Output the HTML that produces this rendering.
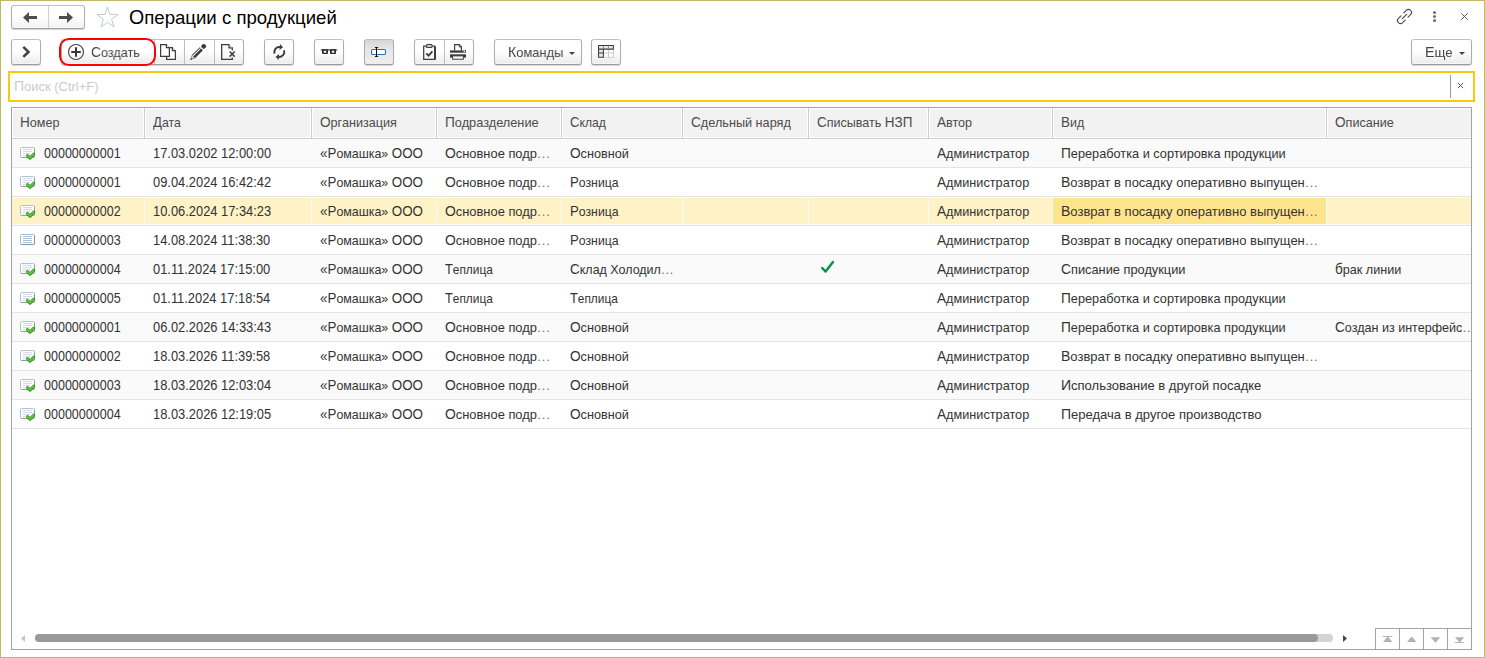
<!DOCTYPE html>
<html lang="ru"><head><meta charset="utf-8"><title>Операции с продукцией</title>
<style>
*{box-sizing:border-box;margin:0;padding:0}
html,body{width:1485px;height:658px;overflow:hidden;background:#fff}
body{font-family:"Liberation Sans",sans-serif;font-size:13px;color:#333;position:relative}
.abs{position:absolute}
#frame{position:absolute;left:0;top:0;width:1485px;height:658px;border:1px solid #c3b763;pointer-events:none}
.btn{position:absolute;height:26px;border:1px solid #adadad;border-top-color:#c0c0c0;border-bottom-color:#9c9c9c;border-radius:3px;
 background:linear-gradient(#ffffff 0%,#ffffff 45%,#ebebeb 100%);box-shadow:0 1px 1px rgba(0,0,0,.17),inset 0 -1px 0 rgba(255,255,255,.55)}
.btn.pressed{background:linear-gradient(#d6d6d6 0%,#e6e6e6 40%,#efefef 100%);box-shadow:0 1px 1px rgba(0,0,0,.18)}
.btn .sep{position:absolute;top:0;bottom:0;width:1px;background:#bdbdbd}
.btn svg{position:absolute}
.t{position:absolute;white-space:nowrap;font-size:13px;line-height:16px;height:16px;transform-origin:0 0}
.t.n,.c,.t::first-letter{font-size:14px}
.t.ttl::first-letter{font-size:20px}
.c,.t::first-letter{line-height:0}
.el{letter-spacing:0.85px;color:#6e6e6e;margin-left:0.4px}
.bt{color:#444;will-change:transform}
.t.ttl{color:#000;font-size:19px;line-height:22px;height:22px}
#search{position:absolute;left:8px;top:71px;width:1467px;height:31px;border:2px solid #f9c910;background:#fff}
#grid{position:absolute;left:11px;top:107px;width:1461px;height:543px;border:1px solid #a3a3a3;background:#fff;overflow:hidden}
.hc{position:absolute;top:0;height:30px;background:#f2f2f2;border:1px solid #fff;}
.hs{position:absolute;top:0;height:30px;width:1px;background:#cdcdcd}
.hl{position:absolute;left:0;right:0;height:1px}
.row{position:absolute;left:0;width:1459px;height:28px}
.row.odd{background:#fafafa}
.rs{position:absolute;left:0;width:1459px;height:1px;background:#e4e4e4}
.sel{position:absolute;top:1px;height:26px;background:#fff2c6}
.sel.cur{background:#ffe48e}
.h{color:#4b4b4b}
</style></head>
<body>
<div class="btn" style="left:11px;top:5px;width:74px;height:24px;background:linear-gradient(#fff 0%,#fff 45%,#f1f1f1 100%)"><div class="sep" style="left:36px;background:#d0d0d0"></div></div>
<svg class="abs" style="left:23px;top:12px" width="14" height="11" viewBox="0 0 14 11" ><path d="M0 5.5 L6 0 V4 H14 V7 H6 V11 Z" fill="#4d4d4d"/></svg>
<svg class="abs" style="left:59px;top:12px" width="14" height="11" viewBox="0 0 14 11" ><path d="M14 5.5 L8 0 V4 H0 V7 H8 V11 Z" fill="#4d4d4d"/></svg>
<svg class="abs" style="left:95px;top:6px" width="25" height="23" viewBox="0 0 25 23" ><path d="M12.50 0.90 L15.03 8.52 L23.06 8.57 L16.59 13.33 L19.02 20.98 L12.50 16.30 L5.98 20.98 L8.41 13.33 L1.94 8.57 L9.97 8.52 Z" fill="#fff" stroke="#bfc8d3" stroke-width="1" stroke-linejoin="miter"/></svg>
<div class="t ttl" id="title" style="left:129.0px;top:7px;transform:scaleX(0.9788)">Операции с продукцией</div>
<svg class="abs" style="left:1396px;top:8px" width="17" height="17" viewBox="0 0 17 17" ><g transform="translate(8.5 8.5) rotate(-45)" fill="none" stroke="#4a4a4a" stroke-width="1.15" stroke-linecap="round"><path d="M2 -3 H5.6 A3 3 0 0 1 5.6 3 H2"/><path d="M-2 3 H-5.6 A3 3 0 0 1 -5.6 -3 H-2"/><path d="M-3.1 0 H3.1"/></g></svg>
<svg class="abs" style="left:1432px;top:10px" width="5" height="13" viewBox="0 0 5 13" ><g fill="#757575"><circle cx="2.5" cy="2.45" r="1.55"/><circle cx="2.5" cy="6.5" r="1.55"/><circle cx="2.5" cy="10.6" r="1.55"/></g></svg>
<svg class="abs" style="left:1460px;top:12px" width="9" height="9" viewBox="0 0 9 9" ><path d="M1.3 1.3 L7.7 7.7 M7.7 1.3 L1.3 7.7" stroke="#555" stroke-width="1" fill="none"/></svg>
<div class="btn" style="left:11px;top:39px;width:30px"></div>
<svg class="abs" style="left:18px;top:45px" width="14" height="14" viewBox="0 0 14 14" ><path d="M5.3 1.9 L10.5 6.9 L5.3 11.9" fill="none" stroke="#3f3f3f" stroke-width="2.5"/></svg>
<div class="btn" style="left:61px;top:39px;width:183px"><div class="sep" style="left:92px"></div><div class="sep" style="left:122px"></div><div class="sep" style="left:152px"></div></div>
<div class="abs" style="left:59px;top:38px;width:97px;height:28px;border:2px solid #f00;border-radius:10px"></div>
<svg class="abs" style="left:67px;top:43px" width="18" height="18" viewBox="0 0 18 18" ><circle cx="9" cy="9" r="7.5" fill="none" stroke="#444" stroke-width="1.15"/><path d="M9 4.2 V13.8 M4.2 9 H13.8" stroke="#383838" stroke-width="2"/></svg>
<div class="t bt" id="bt_create" style="left:91.0px;top:45px;transform:scaleX(0.975)">Создать</div>
<svg class="abs" style="left:160px;top:44px" width="17" height="17" viewBox="0 0 17 17" ><g fill="#fff" stroke="#3d3d3d" stroke-width="1.25" stroke-linejoin="miter"><path d="M6.6 3.6 H12.4 V6.6 H15.4 V15.4 H6.6 Z"/><path d="M0.6 0.6 H6.4 V3.6 H9.4 V12.4 H0.6 Z"/></g><path d="M6.9 0.9 L9.2 3.2 M12.9 3.9 L15.2 6.2" stroke="#aaa" stroke-width="0.9" fill="none"/></svg>
<svg class="abs" style="left:190px;top:44px" width="17" height="17" viewBox="0 0 17 17" ><rect x="11.54" y="0.16" width="4.4" height="4.4" rx="1.6" fill="#3a3a3a" transform="rotate(45 13.74 2.36)"/><path d="M12.90 6.32 L9.78 3.20 L1.90 11.09 L5.01 14.20 Z" fill="#3a3a3a" /><path d="M10.95 4.65 L10.24 3.95 L2.22 11.98 L2.92 12.68 Z" fill="#fafafa" /><path d="M5.01 14.20 L1.90 11.09 L0.20 15.90 Z" fill="#777" /><path d="M3.95 13.85 L2.11 12.01 L1.54 14.42 Z" fill="#ededed" /><path d="M2.22 15.23 L0.87 13.88 L0.20 15.90 Z" fill="#3a3a3a" /></svg>
<svg class="abs" style="left:220px;top:44px" width="16" height="16" viewBox="0 0 16 16" ><g fill="none" stroke="#3d3d3d" stroke-width="1.3"><path d="M12.3 6.4 V3.9 H9 V0.7 H1.7 V15.3 H12.3 V13.4"/><path d="M9.6 7.5 L14.7 12.6 M14.7 7.5 L9.6 12.6" stroke-width="1.5"/></g><path d="M9.4 1 L12 3.6" stroke="#aaa" stroke-width="0.9"/></svg>
<div class="btn" style="left:264px;top:39px;width:30px"></div>
<svg class="abs" style="left:271px;top:43px" width="17" height="18" viewBox="0 0 17 18" ><g fill="none" stroke="#3d3d3d" stroke-width="2"><path d="M3.60 10.71 A5.0 5.0 0 0 1 9.17 4.08"/><path d="M13.00 7.29 A5.0 5.0 0 0 1 7.43 13.92"/></g><path d="M9.00 1.03 L8.47 7.01 L12.02 4.31 Z" fill="#3d3d3d"/><path d="M7.60 16.97 L8.13 10.99 L4.58 13.69 Z" fill="#3d3d3d"/></svg>
<div class="btn" style="left:314px;top:39px;width:30px"></div>
<svg class="abs" style="left:320px;top:48px" width="18" height="7" viewBox="0 0 18 7" ><g fill="#2e2e2e"><path fill-rule="evenodd" d="M2 1.3 h6 v3.7 q0 0.9 -0.9 0.9 h-4.2 q-0.9 0 -0.9 -0.9 z M3.8 2.4 v2.3 h2.4 v-2.3 z"/><path fill-rule="evenodd" d="M10 1.3 h6 v3.7 q0 0.9 -0.9 0.9 h-4.2 q-0.9 0 -0.9 -0.9 z M11.8 2.4 v2.3 h2.4 v-2.3 z"/><rect x="0.8" y="1.4" width="16.4" height="1.1"/></g></svg>
<div class="btn pressed" style="left:364px;top:39px;width:30px"></div>
<svg class="abs" style="left:370px;top:46px" width="18" height="12" viewBox="0 0 18 12" ><rect x="1.55" y="3.55" width="13.9" height="4.9" rx="1.3" fill="#fff" stroke="#2f73ad" stroke-width="1.1"/><path d="M4.9 1.5 H8.1 M4.9 10.5 H8.1 M6.5 1.5 V10.5" stroke="#111" stroke-width="1" fill="none"/></svg>
<div class="btn" style="left:414px;top:39px;width:60px"><div class="sep" style="left:29px"></div></div>
<svg class="abs" style="left:422px;top:44px" width="15" height="16" viewBox="0 0 15 16" ><g fill="none" stroke="#3d3d3d" stroke-width="1.25"><path d="M4 2.1 H1.7 V15.3 H12.6 V2.1 H10.8"/><rect x="4.5" y="0.7" width="5.6" height="2.6" rx="0.9" fill="#fff"/><path d="M13.5 2.4 V15.6" stroke-width="1"/><path d="M4.3 9.3 L6.6 11.6 L10.4 7.4" stroke-width="1.9"/></g></svg>
<svg class="abs" style="left:450px;top:44px" width="16" height="16" viewBox="0 0 16 16" ><g><path d="M4.6 6.4 V0.6 H9.2 L11.4 2.8 V6.4" fill="#fff" stroke="#3d3d3d" stroke-width="1.2"/><path d="M9.2 0.8 V3 H11.2" fill="none" stroke="#3d3d3d" stroke-width="0.8"/><rect x="0" y="6.4" width="16" height="2.3" fill="#3d3d3d"/><rect x="0" y="10.3" width="16" height="3.3" fill="#3d3d3d"/><rect x="2.6" y="11.9" width="10.8" height="3.3" fill="#fff" stroke="#3d3d3d" stroke-width="1"/><circle cx="14.3" cy="7.5" r="0.8" fill="#fff"/></g></svg>
<div class="btn" style="left:494px;top:39px;width:88px"></div>
<div class="t bt" id="bt_cmd" style="left:508.0px;top:45px;transform:scaleX(0.9947)">Команды</div>
<svg class="abs" style="left:569px;top:52px" width="6" height="3" viewBox="0 0 6 3" ><path d="M0 0 H6 L3 3 Z" fill="#444"/></svg>
<div class="btn" style="left:591px;top:39px;width:30px"></div>
<svg class="abs" style="left:598px;top:45px" width="16" height="13" viewBox="0 0 16 13" ><rect x="0.5" y="0.5" width="15" height="12" fill="#fff"/><rect x="1" y="1" width="14" height="3" fill="#e9e9e9"/><rect x="1" y="4.5" width="4.5" height="7.5" fill="#e9e9e9"/><path d="M10.5 4.5 V12.3 M5.5 8 H15.4 M15.3 4.5 V12.5 M5.5 12.3 H15.5" stroke="#c6c6c6" stroke-width="0.9" fill="none"/><path d="M0.55 0.55 H15.4 V4.1 H0.55 Z M0.55 4.1 V12.3 H5.4 V4.1 M0.55 8 H5.4" stroke="#3d3d3d" stroke-width="1.05" fill="none"/><path d="M5.4 1.2 V3.5 M10.5 1.2 V3.5" stroke="#777" stroke-width="0.8" fill="none"/></svg>
<div class="btn" style="left:1411px;top:39px;width:61px"></div>
<div class="t bt" id="bt_more" style="left:1425.0px;top:45px;transform:scaleX(1.0187)">Еще</div>
<svg class="abs" style="left:1459px;top:52px" width="6" height="3" viewBox="0 0 6 3" ><path d="M0 0 H6 L3 3 Z" fill="#444"/></svg>
<div id="search"></div>
<div class="t" id="ph" style="left:14.0px;top:79px;transform:scaleX(0.997);color:#cbcbd1">Поиск (Ctrl+F)</div>
<div class="abs" style="left:1450px;top:75px;width:1px;height:23px;background:#9a9a9a"></div>
<svg class="abs" style="left:1457px;top:82px" width="7" height="7" viewBox="0 0 7 7" ><path d="M0.9 0.9 L6.1 6.1 M6.1 0.9 L0.9 6.1" stroke="#4a4a4a" stroke-width="0.95" fill="none"/></svg>
<div id="grid"><div class="hc" style="left:0px;width:132px"></div><div class="hc" style="left:133px;width:166px"></div><div class="hc" style="left:300px;width:124px"></div><div class="hc" style="left:425px;width:124px"></div><div class="hc" style="left:550px;width:120px"></div><div class="hc" style="left:671px;width:125px"></div><div class="hc" style="left:797px;width:119px"></div><div class="hc" style="left:917px;width:123px"></div><div class="hc" style="left:1041px;width:273px"></div><div class="hc" style="left:1315px;width:144px;border-right:0"></div><div class="hs" style="left:132px"></div><div class="hs" style="left:299px"></div><div class="hs" style="left:424px"></div><div class="hs" style="left:549px"></div><div class="hs" style="left:670px"></div><div class="hs" style="left:796px"></div><div class="hs" style="left:916px"></div><div class="hs" style="left:1040px"></div><div class="hs" style="left:1314px"></div><div class="hl" style="top:30px;background:#cfcfcf"></div><div class="row odd" style="top:31px"></div><div class="rs" style="top:59px"></div><div class="row" style="top:60px"></div><div class="rs" style="top:88px"></div><div class="row odd" style="top:89px"><div class="sel" style="left:0px;width:132px"></div><div class="sel" style="left:133px;width:166px"></div><div class="sel" style="left:300px;width:124px"></div><div class="sel" style="left:425px;width:124px"></div><div class="sel" style="left:550px;width:120px"></div><div class="sel" style="left:671px;width:125px"></div><div class="sel" style="left:797px;width:119px"></div><div class="sel" style="left:917px;width:123px"></div><div class="sel cur" style="left:1041px;width:273px"></div><div class="sel" style="left:1315px;width:144px"></div></div><div class="rs" style="top:117px"></div><div class="row" style="top:118px"></div><div class="rs" style="top:146px"></div><div class="row odd" style="top:147px"></div><div class="rs" style="top:175px"></div><div class="row" style="top:176px"></div><div class="rs" style="top:204px"></div><div class="row odd" style="top:205px"></div><div class="rs" style="top:233px"></div><div class="row" style="top:234px"></div><div class="rs" style="top:262px"></div><div class="row odd" style="top:263px"></div><div class="rs" style="top:291px"></div><div class="row" style="top:292px"></div><div class="rs" style="top:320px"></div></div>
<div class="t h" id="h0" style="left:20.0px;top:115px;transform:scaleX(0.9674)">Номер</div>
<div class="t h" id="h1" style="left:153.0px;top:115px;transform:scaleX(0.9416)">Дата</div>
<div class="t h" id="h2" style="left:320.0px;top:115px;transform:scaleX(0.9715)">Организация</div>
<div class="t h" id="h3" style="left:445.0px;top:115px;transform:scaleX(0.9805)">Подразделение</div>
<div class="t h" id="h4" style="left:570.0px;top:115px;transform:scaleX(0.9332)">Склад</div>
<div class="t h" id="h5" style="left:691.0px;top:115px;transform:scaleX(0.975)">Сдельный наряд</div>
<div class="t h" id="h6" style="left:817.0px;top:115px;transform:scaleX(0.9648)">Списывать <span class="c">НЗП</span></div>
<div class="t h" id="h7" style="left:937.0px;top:115px;transform:scaleX(0.9684)">Автор</div>
<div class="t h" id="h8" style="left:1061.0px;top:115px;transform:scaleX(0.9582)">Вид</div>
<div class="t h" id="h9" style="left:1335.0px;top:115px;transform:scaleX(0.9708)">Описание</div>
<svg class="abs" style="left:20px;top:147px" width="16" height="14" viewBox="0 0 16 14" ><rect x="0.5" y="0.5" width="14" height="10" rx="1.2" fill="#fff" stroke="#b3c2d2" stroke-width="1"/><path d="M14.5 1.5 V9.3 Q14.5 10.5 13.3 10.5 H1.7 Q0.9 10.5 0.6 9.9" fill="none" stroke="#8a9db3" stroke-width="1"/><path d="M3 2.5 H12 M3 4.5 H12 M3 6.5 H10 M3 8.5 H5" stroke="#d2dce7" stroke-width="1"/><path d="M7.5 8.6 L10 11.1 L13.7 7.2" fill="none" stroke="#2f8f14" stroke-width="3" stroke-linecap="round" stroke-linejoin="round"/><path d="M7.5 8.5 L10 11 L13.7 7.1" fill="none" stroke="#66cc3d" stroke-width="1.5" stroke-linecap="round" stroke-linejoin="round"/></svg>
<div class="t n" id="r0c0" style="left:44.0px;top:145px;transform:scaleX(0.8947)">00000000001</div>
<div class="t n" id="r0c1" style="left:153.0px;top:145px;transform:scaleX(0.9199)">17.03.0202 12:00:00</div>
<div class="t" id="r0c2" style="left:320.0px;top:146px;transform:scaleX(0.9565)">«Ромашка» <span class="c">ООО</span></div>
<div class="t" id="r0c3" style="left:445.0px;top:146px;transform:scaleX(0.9911)">Основное подр<span class="el">...</span></div>
<div class="t" id="r0c4" style="left:570.0px;top:146px;transform:scaleX(0.9746)">Основной</div>
<div class="t" id="r0c5" style="left:937.0px;top:146px;transform:scaleX(0.9761)">Администратор</div>
<div class="t" id="r0c6" style="left:1061.0px;top:146px;transform:scaleX(0.9795)">Переработка и сортировка продукции</div>
<svg class="abs" style="left:20px;top:176px" width="16" height="14" viewBox="0 0 16 14" ><rect x="0.5" y="0.5" width="14" height="10" rx="1.2" fill="#fff" stroke="#b3c2d2" stroke-width="1"/><path d="M14.5 1.5 V9.3 Q14.5 10.5 13.3 10.5 H1.7 Q0.9 10.5 0.6 9.9" fill="none" stroke="#8a9db3" stroke-width="1"/><path d="M3 2.5 H12 M3 4.5 H12 M3 6.5 H10 M3 8.5 H5" stroke="#d2dce7" stroke-width="1"/><path d="M7.5 8.6 L10 11.1 L13.7 7.2" fill="none" stroke="#2f8f14" stroke-width="3" stroke-linecap="round" stroke-linejoin="round"/><path d="M7.5 8.5 L10 11 L13.7 7.1" fill="none" stroke="#66cc3d" stroke-width="1.5" stroke-linecap="round" stroke-linejoin="round"/></svg>
<div class="t n" id="r1c0" style="left:44.0px;top:174px;transform:scaleX(0.8947)">00000000001</div>
<div class="t n" id="r1c1" style="left:153.0px;top:174px;transform:scaleX(0.9199)">09.04.2024 16:42:42</div>
<div class="t" id="r1c2" style="left:320.0px;top:175px;transform:scaleX(0.9565)">«Ромашка» <span class="c">ООО</span></div>
<div class="t" id="r1c3" style="left:445.0px;top:175px;transform:scaleX(0.9911)">Основное подр<span class="el">...</span></div>
<div class="t" id="r1c4" style="left:570.0px;top:175px;transform:scaleX(0.9433)">Розница</div>
<div class="t" id="r1c5" style="left:937.0px;top:175px;transform:scaleX(0.9761)">Администратор</div>
<div class="t" id="r1c6" style="left:1061.0px;top:175px;transform:scaleX(1.0006)">Возврат в посадку оперативно выпущен<span class="el">...</span></div>
<svg class="abs" style="left:20px;top:205px" width="16" height="14" viewBox="0 0 16 14" ><rect x="0.5" y="0.5" width="14" height="10" rx="1.2" fill="#fff" stroke="#b3c2d2" stroke-width="1"/><path d="M14.5 1.5 V9.3 Q14.5 10.5 13.3 10.5 H1.7 Q0.9 10.5 0.6 9.9" fill="none" stroke="#8a9db3" stroke-width="1"/><path d="M3 2.5 H12 M3 4.5 H12 M3 6.5 H10 M3 8.5 H5" stroke="#d2dce7" stroke-width="1"/><path d="M7.5 8.6 L10 11.1 L13.7 7.2" fill="none" stroke="#2f8f14" stroke-width="3" stroke-linecap="round" stroke-linejoin="round"/><path d="M7.5 8.5 L10 11 L13.7 7.1" fill="none" stroke="#66cc3d" stroke-width="1.5" stroke-linecap="round" stroke-linejoin="round"/></svg>
<div class="t n" id="r2c0" style="left:44.0px;top:203px;transform:scaleX(0.8947)">00000000002</div>
<div class="t n" id="r2c1" style="left:153.0px;top:203px;transform:scaleX(0.9199)">10.06.2024 17:34:23</div>
<div class="t" id="r2c2" style="left:320.0px;top:204px;transform:scaleX(0.9565)">«Ромашка» <span class="c">ООО</span></div>
<div class="t" id="r2c3" style="left:445.0px;top:204px;transform:scaleX(0.9911)">Основное подр<span class="el">...</span></div>
<div class="t" id="r2c4" style="left:570.0px;top:204px;transform:scaleX(0.9433)">Розница</div>
<div class="t" id="r2c5" style="left:937.0px;top:204px;transform:scaleX(0.9761)">Администратор</div>
<div class="t" id="r2c6" style="left:1061.0px;top:204px;transform:scaleX(1.0006)">Возврат в посадку оперативно выпущен<span class="el">...</span></div>
<svg class="abs" style="left:20px;top:234px" width="16" height="14" viewBox="0 0 16 14" ><rect x="0.5" y="0.5" width="14" height="10" rx="1.2" fill="#fff" stroke="#a6b8cb" stroke-width="1"/><path d="M14.5 1.5 V9.3 Q14.5 10.5 13.3 10.5 H1.7 Q0.9 10.5 0.6 9.9" fill="none" stroke="#7d91a8" stroke-width="1"/><path d="M3 2.5 H12 M3 4.5 H12 M3 6.5 H12 M3 8.5 H12" stroke="#a9c1d7" stroke-width="1"/></svg>
<div class="t n" id="r3c0" style="left:44.0px;top:232px;transform:scaleX(0.8947)">00000000003</div>
<div class="t n" id="r3c1" style="left:153.0px;top:232px;transform:scaleX(0.9199)">14.08.2024 11:38:30</div>
<div class="t" id="r3c2" style="left:320.0px;top:233px;transform:scaleX(0.9565)">«Ромашка» <span class="c">ООО</span></div>
<div class="t" id="r3c3" style="left:445.0px;top:233px;transform:scaleX(0.9911)">Основное подр<span class="el">...</span></div>
<div class="t" id="r3c4" style="left:570.0px;top:233px;transform:scaleX(0.9433)">Розница</div>
<div class="t" id="r3c5" style="left:937.0px;top:233px;transform:scaleX(0.9761)">Администратор</div>
<div class="t" id="r3c6" style="left:1061.0px;top:233px;transform:scaleX(1.0006)">Возврат в посадку оперативно выпущен<span class="el">...</span></div>
<svg class="abs" style="left:20px;top:263px" width="16" height="14" viewBox="0 0 16 14" ><rect x="0.5" y="0.5" width="14" height="10" rx="1.2" fill="#fff" stroke="#b3c2d2" stroke-width="1"/><path d="M14.5 1.5 V9.3 Q14.5 10.5 13.3 10.5 H1.7 Q0.9 10.5 0.6 9.9" fill="none" stroke="#8a9db3" stroke-width="1"/><path d="M3 2.5 H12 M3 4.5 H12 M3 6.5 H10 M3 8.5 H5" stroke="#d2dce7" stroke-width="1"/><path d="M7.5 8.6 L10 11.1 L13.7 7.2" fill="none" stroke="#2f8f14" stroke-width="3" stroke-linecap="round" stroke-linejoin="round"/><path d="M7.5 8.5 L10 11 L13.7 7.1" fill="none" stroke="#66cc3d" stroke-width="1.5" stroke-linecap="round" stroke-linejoin="round"/></svg>
<div class="t n" id="r4c0" style="left:44.0px;top:261px;transform:scaleX(0.8947)">00000000004</div>
<div class="t n" id="r4c1" style="left:153.0px;top:261px;transform:scaleX(0.9199)">01.11.2024 17:15:00</div>
<div class="t" id="r4c2" style="left:320.0px;top:262px;transform:scaleX(0.9565)">«Ромашка» <span class="c">ООО</span></div>
<div class="t" id="r4c3" style="left:445.0px;top:262px;transform:scaleX(0.9138)">Теплица</div>
<div class="t" id="r4c4" style="left:570.0px;top:262px;transform:scaleX(0.9611)">Склад Холодил<span class="el">...</span></div>
<div class="t" id="r4c5" style="left:937.0px;top:262px;transform:scaleX(0.9761)">Администратор</div>
<div class="t" id="r4c6" style="left:1061.0px;top:262px;transform:scaleX(0.985)">Списание продукции</div>
<div class="t" id="r4c7" style="left:1335.0px;top:262px;transform:scaleX(0.9687);width:140.39px;overflow:hidden">брак линии</div>
<svg class="abs" style="left:820px;top:260px" width="16" height="14" viewBox="0 0 16 14" ><path d="M2.2 8 L5.6 11.6 L13 2" fill="none" stroke="#009646" stroke-width="2.4" stroke-linecap="round" stroke-linejoin="round"/></svg>
<svg class="abs" style="left:20px;top:292px" width="16" height="14" viewBox="0 0 16 14" ><rect x="0.5" y="0.5" width="14" height="10" rx="1.2" fill="#fff" stroke="#b3c2d2" stroke-width="1"/><path d="M14.5 1.5 V9.3 Q14.5 10.5 13.3 10.5 H1.7 Q0.9 10.5 0.6 9.9" fill="none" stroke="#8a9db3" stroke-width="1"/><path d="M3 2.5 H12 M3 4.5 H12 M3 6.5 H10 M3 8.5 H5" stroke="#d2dce7" stroke-width="1"/><path d="M7.5 8.6 L10 11.1 L13.7 7.2" fill="none" stroke="#2f8f14" stroke-width="3" stroke-linecap="round" stroke-linejoin="round"/><path d="M7.5 8.5 L10 11 L13.7 7.1" fill="none" stroke="#66cc3d" stroke-width="1.5" stroke-linecap="round" stroke-linejoin="round"/></svg>
<div class="t n" id="r5c0" style="left:44.0px;top:290px;transform:scaleX(0.8947)">00000000005</div>
<div class="t n" id="r5c1" style="left:153.0px;top:290px;transform:scaleX(0.9199)">01.11.2024 17:18:54</div>
<div class="t" id="r5c2" style="left:320.0px;top:291px;transform:scaleX(0.9565)">«Ромашка» <span class="c">ООО</span></div>
<div class="t" id="r5c3" style="left:445.0px;top:291px;transform:scaleX(0.9138)">Теплица</div>
<div class="t" id="r5c4" style="left:570.0px;top:291px;transform:scaleX(0.9138)">Теплица</div>
<div class="t" id="r5c5" style="left:937.0px;top:291px;transform:scaleX(0.9761)">Администратор</div>
<div class="t" id="r5c6" style="left:1061.0px;top:291px;transform:scaleX(0.9795)">Переработка и сортировка продукции</div>
<svg class="abs" style="left:20px;top:321px" width="16" height="14" viewBox="0 0 16 14" ><rect x="0.5" y="0.5" width="14" height="10" rx="1.2" fill="#fff" stroke="#b3c2d2" stroke-width="1"/><path d="M14.5 1.5 V9.3 Q14.5 10.5 13.3 10.5 H1.7 Q0.9 10.5 0.6 9.9" fill="none" stroke="#8a9db3" stroke-width="1"/><path d="M3 2.5 H12 M3 4.5 H12 M3 6.5 H10 M3 8.5 H5" stroke="#d2dce7" stroke-width="1"/><path d="M7.5 8.6 L10 11.1 L13.7 7.2" fill="none" stroke="#2f8f14" stroke-width="3" stroke-linecap="round" stroke-linejoin="round"/><path d="M7.5 8.5 L10 11 L13.7 7.1" fill="none" stroke="#66cc3d" stroke-width="1.5" stroke-linecap="round" stroke-linejoin="round"/></svg>
<div class="t n" id="r6c0" style="left:44.0px;top:319px;transform:scaleX(0.8947)">00000000001</div>
<div class="t n" id="r6c1" style="left:153.0px;top:319px;transform:scaleX(0.9199)">06.02.2026 14:33:43</div>
<div class="t" id="r6c2" style="left:320.0px;top:320px;transform:scaleX(0.9565)">«Ромашка» <span class="c">ООО</span></div>
<div class="t" id="r6c3" style="left:445.0px;top:320px;transform:scaleX(0.9911)">Основное подр<span class="el">...</span></div>
<div class="t" id="r6c4" style="left:570.0px;top:320px;transform:scaleX(0.9746)">Основной</div>
<div class="t" id="r6c5" style="left:937.0px;top:320px;transform:scaleX(0.9761)">Администратор</div>
<div class="t" id="r6c6" style="left:1061.0px;top:320px;transform:scaleX(0.9795)">Переработка и сортировка продукции</div>
<div class="t" id="r6c7" style="left:1335.0px;top:320px;transform:scaleX(0.9669);width:140.66px;overflow:hidden">Создан из интерфейс<span class="el">...</span></div>
<svg class="abs" style="left:20px;top:350px" width="16" height="14" viewBox="0 0 16 14" ><rect x="0.5" y="0.5" width="14" height="10" rx="1.2" fill="#fff" stroke="#b3c2d2" stroke-width="1"/><path d="M14.5 1.5 V9.3 Q14.5 10.5 13.3 10.5 H1.7 Q0.9 10.5 0.6 9.9" fill="none" stroke="#8a9db3" stroke-width="1"/><path d="M3 2.5 H12 M3 4.5 H12 M3 6.5 H10 M3 8.5 H5" stroke="#d2dce7" stroke-width="1"/><path d="M7.5 8.6 L10 11.1 L13.7 7.2" fill="none" stroke="#2f8f14" stroke-width="3" stroke-linecap="round" stroke-linejoin="round"/><path d="M7.5 8.5 L10 11 L13.7 7.1" fill="none" stroke="#66cc3d" stroke-width="1.5" stroke-linecap="round" stroke-linejoin="round"/></svg>
<div class="t n" id="r7c0" style="left:44.0px;top:348px;transform:scaleX(0.8947)">00000000002</div>
<div class="t n" id="r7c1" style="left:153.0px;top:348px;transform:scaleX(0.9199)">18.03.2026 11:39:58</div>
<div class="t" id="r7c2" style="left:320.0px;top:349px;transform:scaleX(0.9565)">«Ромашка» <span class="c">ООО</span></div>
<div class="t" id="r7c3" style="left:445.0px;top:349px;transform:scaleX(0.9911)">Основное подр<span class="el">...</span></div>
<div class="t" id="r7c4" style="left:570.0px;top:349px;transform:scaleX(0.9746)">Основной</div>
<div class="t" id="r7c5" style="left:937.0px;top:349px;transform:scaleX(0.9761)">Администратор</div>
<div class="t" id="r7c6" style="left:1061.0px;top:349px;transform:scaleX(1.0006)">Возврат в посадку оперативно выпущен<span class="el">...</span></div>
<svg class="abs" style="left:20px;top:379px" width="16" height="14" viewBox="0 0 16 14" ><rect x="0.5" y="0.5" width="14" height="10" rx="1.2" fill="#fff" stroke="#b3c2d2" stroke-width="1"/><path d="M14.5 1.5 V9.3 Q14.5 10.5 13.3 10.5 H1.7 Q0.9 10.5 0.6 9.9" fill="none" stroke="#8a9db3" stroke-width="1"/><path d="M3 2.5 H12 M3 4.5 H12 M3 6.5 H10 M3 8.5 H5" stroke="#d2dce7" stroke-width="1"/><path d="M7.5 8.6 L10 11.1 L13.7 7.2" fill="none" stroke="#2f8f14" stroke-width="3" stroke-linecap="round" stroke-linejoin="round"/><path d="M7.5 8.5 L10 11 L13.7 7.1" fill="none" stroke="#66cc3d" stroke-width="1.5" stroke-linecap="round" stroke-linejoin="round"/></svg>
<div class="t n" id="r8c0" style="left:44.0px;top:377px;transform:scaleX(0.8947)">00000000003</div>
<div class="t n" id="r8c1" style="left:153.0px;top:377px;transform:scaleX(0.9199)">18.03.2026 12:03:04</div>
<div class="t" id="r8c2" style="left:320.0px;top:378px;transform:scaleX(0.9565)">«Ромашка» <span class="c">ООО</span></div>
<div class="t" id="r8c3" style="left:445.0px;top:378px;transform:scaleX(0.9911)">Основное подр<span class="el">...</span></div>
<div class="t" id="r8c4" style="left:570.0px;top:378px;transform:scaleX(0.9746)">Основной</div>
<div class="t" id="r8c5" style="left:937.0px;top:378px;transform:scaleX(0.9761)">Администратор</div>
<div class="t" id="r8c6" style="left:1061.0px;top:378px;transform:scaleX(1.0009)">Использование в другой посадке</div>
<svg class="abs" style="left:20px;top:408px" width="16" height="14" viewBox="0 0 16 14" ><rect x="0.5" y="0.5" width="14" height="10" rx="1.2" fill="#fff" stroke="#b3c2d2" stroke-width="1"/><path d="M14.5 1.5 V9.3 Q14.5 10.5 13.3 10.5 H1.7 Q0.9 10.5 0.6 9.9" fill="none" stroke="#8a9db3" stroke-width="1"/><path d="M3 2.5 H12 M3 4.5 H12 M3 6.5 H10 M3 8.5 H5" stroke="#d2dce7" stroke-width="1"/><path d="M7.5 8.6 L10 11.1 L13.7 7.2" fill="none" stroke="#2f8f14" stroke-width="3" stroke-linecap="round" stroke-linejoin="round"/><path d="M7.5 8.5 L10 11 L13.7 7.1" fill="none" stroke="#66cc3d" stroke-width="1.5" stroke-linecap="round" stroke-linejoin="round"/></svg>
<div class="t n" id="r9c0" style="left:44.0px;top:406px;transform:scaleX(0.8947)">00000000004</div>
<div class="t n" id="r9c1" style="left:153.0px;top:406px;transform:scaleX(0.9199)">18.03.2026 12:19:05</div>
<div class="t" id="r9c2" style="left:320.0px;top:407px;transform:scaleX(0.9565)">«Ромашка» <span class="c">ООО</span></div>
<div class="t" id="r9c3" style="left:445.0px;top:407px;transform:scaleX(0.9911)">Основное подр<span class="el">...</span></div>
<div class="t" id="r9c4" style="left:570.0px;top:407px;transform:scaleX(0.9746)">Основной</div>
<div class="t" id="r9c5" style="left:937.0px;top:407px;transform:scaleX(0.9761)">Администратор</div>
<div class="t" id="r9c6" style="left:1061.0px;top:407px;transform:scaleX(1.0009)">Передача в другое производство</div>
<div class="abs" style="left:35px;top:634px;width:1298px;height:8px;border-radius:4px;background:#d4d4d4"></div>
<div class="abs" style="left:35px;top:634px;width:1283px;height:8px;border-radius:4px;background:#999"></div>
<svg class="abs" style="left:21px;top:635px" width="4" height="7" viewBox="0 0 4 7" ><path d="M4 0 V7 L0 3.5 Z" fill="#c4c4c4"/></svg>
<svg class="abs" style="left:1343px;top:635px" width="4" height="7" viewBox="0 0 4 7" ><path d="M0 0 V7 L4 3.5 Z" fill="#444"/></svg>
<div class="abs" style="left:1375px;top:628px;width:97px;height:22px;border:1px solid #a3a3a3;background:#fff"></div>
<div class="abs" style="left:1399px;top:628px;width:1px;height:22px;background:#a3a3a3"></div>
<div class="abs" style="left:1423px;top:628px;width:1px;height:22px;background:#a3a3a3"></div>
<div class="abs" style="left:1447px;top:628px;width:1px;height:22px;background:#a3a3a3"></div>
<svg class="abs" style="left:1383px;top:636px" width="10" height="7" viewBox="0 0 10 7" ><path d="M0 0 H9.4 V1 H0 Z M4.1 1 H5.3 L9.4 6 H0 Z" fill="#b3b3b3"/></svg>
<svg class="abs" style="left:1407px;top:637px" width="10" height="6" viewBox="0 0 10 6" ><path d="M4.1 0 H5.3 L9.4 5 H0 Z" fill="#b3b3b3"/></svg>
<svg class="abs" style="left:1431px;top:637px" width="10" height="6" viewBox="0 0 10 6" ><path d="M-0.2 0.2 H9.2 L5.1 5.2 H3.9 Z" fill="#b3b3b3"/></svg>
<svg class="abs" style="left:1455px;top:637px" width="10" height="7" viewBox="0 0 10 7" ><path d="M0 0.2 H9.2 L5.2 5 H4 Z M0 5 H9.2 V6 H0 Z" fill="#b3b3b3"/></svg>
<div id="frame"></div>
</body></html>
